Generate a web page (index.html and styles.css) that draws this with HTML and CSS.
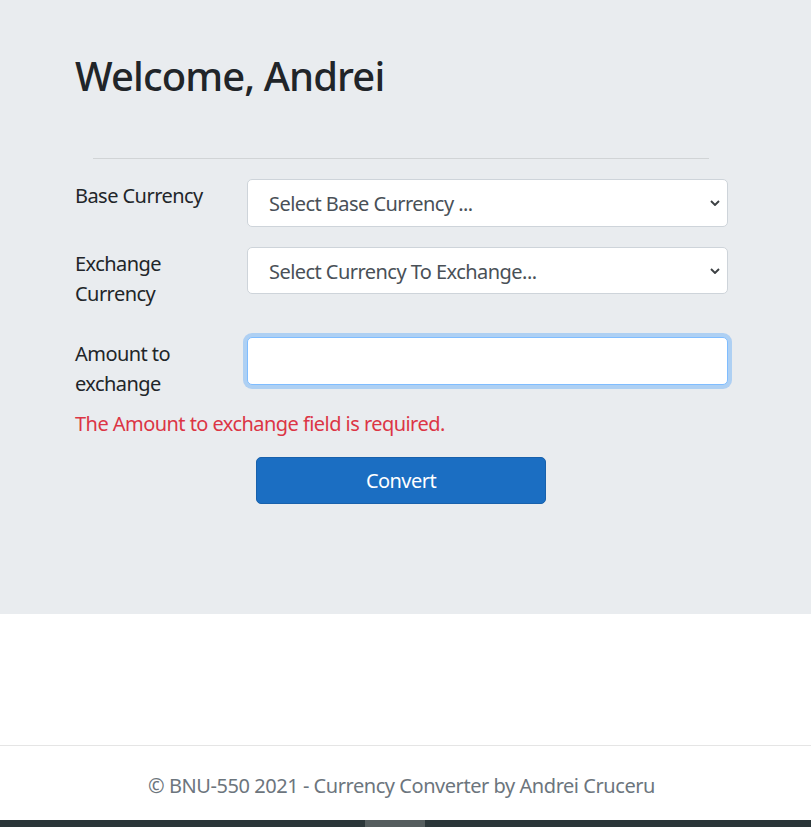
FILE: index.html
```html
<!DOCTYPE html>
<html lang="en">
<head>
<meta charset="utf-8">
<title>Currency Converter</title>
<link rel="stylesheet" href="styles.css">
</head>
<body>
<div class="page">
  <section class="jumbotron">
    <div class="container">
      <h1 class="title">Welcome, Andrei</h1>
      <hr class="divider">
      <form class="form">
        <div class="row row-base">
          <label class="label">Base Currency</label>
          <div class="field">
            <select class="select">
              <option>Select Base Currency ...</option>
            </select>
            <svg class="chevron" viewBox="0 0 10 6" width="10" height="6"><path d="M1 1 L5 5 L9 1" fill="none" stroke="#3c4043" stroke-width="1.9"/></svg>
          </div>
        </div>
        <div class="row row-exchange">
          <label class="label">Exchange Currency</label>
          <div class="field">
            <select class="select">
              <option>Select Currency To Exchange...</option>
            </select>
            <svg class="chevron" viewBox="0 0 10 6" width="10" height="6"><path d="M1 1 L5 5 L9 1" fill="none" stroke="#3c4043" stroke-width="1.9"/></svg>
          </div>
        </div>
        <div class="row row-amount">
          <label class="label">Amount to exchange</label>
          <div class="field">
            <input class="input" type="text">
          </div>
        </div>
        <div class="error">The Amount to exchange field is required.</div>
        <div class="actions">
          <button type="button" class="btn">Convert</button>
        </div>
      </form>
    </div>
  </section>
  <footer class="footer">
    <div class="container footer-text">&copy; BNU-550 2021 - Currency Converter by Andrei Cruceru</div>
  </footer>
  <div class="bottom-bar"><span class="bottom-thumb"></span></div>
</div>
</body>
</html>
```
FILE: styles.css
```css
* { box-sizing: border-box; }
html, body { margin: 0; padding: 0; }
body {
  font-family: "Noto Sans", "Open Sans", "Liberation Sans", sans-serif;
  font-size: 20px;
  line-height: 30px;
  color: #212529;
  background: #fff;
}
.page {
  height: 827px;
  display: flex;
  flex-direction: column;
  overflow: hidden;
}
.jumbotron {
  background: #e9ecef;
  height: 614px;
  padding-top: 52px;
  flex: none;
}
.container {
  width: 653px;
  margin-left: 75px;
}
.title {
  margin: 0;
  font-size: 40px;
  line-height: 48px;
  font-weight: 500;
  letter-spacing: -0.9px;
  color: #212529;
}
.divider {
  margin: 58px 19px 20px 18px;
  border: 0;
  border-top: 1px solid rgba(0,0,0,0.1);
  height: 0;
}
.form { letter-spacing: -0.55px; }
.row {
  display: grid;
  grid-template-columns: 172px 1fr;
}
.row-base { margin-bottom: 20px; }
.row-exchange { margin-bottom: 28px; }
.label {
  display: block;
  width: 150px;
  font-size: 20px;
  line-height: 30px;
  padding-top: 2px;
}
.field { position: relative; }
.select, .input {
  display: block;
  width: 100%;
  height: 48px;
  border: 1px solid #ced4da;
  border-radius: 5px;
  background: #fff;
  font-family: inherit;
  font-size: 20px;
  letter-spacing: -0.55px;
  color: #495057;
  padding: 1px 40px 0 21px;
  -webkit-appearance: none;
  appearance: none;
  outline: none;
}
.row-exchange .select { height: 47px; }
.input {
  border-color: #80bdff;
  box-shadow: 0 0 0 4px rgba(0,123,255,0.25);
}
.chevron {
  position: absolute;
  right: 8px;
  top: 21px;
}
.error {
  margin-top: 10px;
  color: #dc3545;
  font-size: 20px;
  line-height: 30px;
}
.actions {
  display: flex;
  justify-content: center;
  margin-top: 18px;
}
.btn {
  width: 290px;
  height: 47px;
  background: #1b6ec2;
  border: 1px solid #1861ac;
  border-radius: 5px;
  color: #fff;
  font-family: inherit;
  font-size: 20px;
  letter-spacing: -0.55px;
  line-height: 30px;
  padding: 1px 0 0;
  margin-left: -1px;
  cursor: pointer;
}
.footer {
  margin-top: 131px;
  border-top: 1px solid #e5e5e5;
  padding-top: 25px;
  flex: none;
  height: 75px;
}
.footer-text {
  text-align: center;
  color: #6c757d;
  font-size: 20px;
  line-height: 30px;
  letter-spacing: -0.45px;
}
.bottom-bar {
  height: 7px;
  background: #2b3639;
  position: relative;
  flex: none;
}
.bottom-thumb {
  position: absolute;
  left: 365px;
  width: 60px;
  top: 0;
  bottom: 0;
  background: #555d5e;
}
```
